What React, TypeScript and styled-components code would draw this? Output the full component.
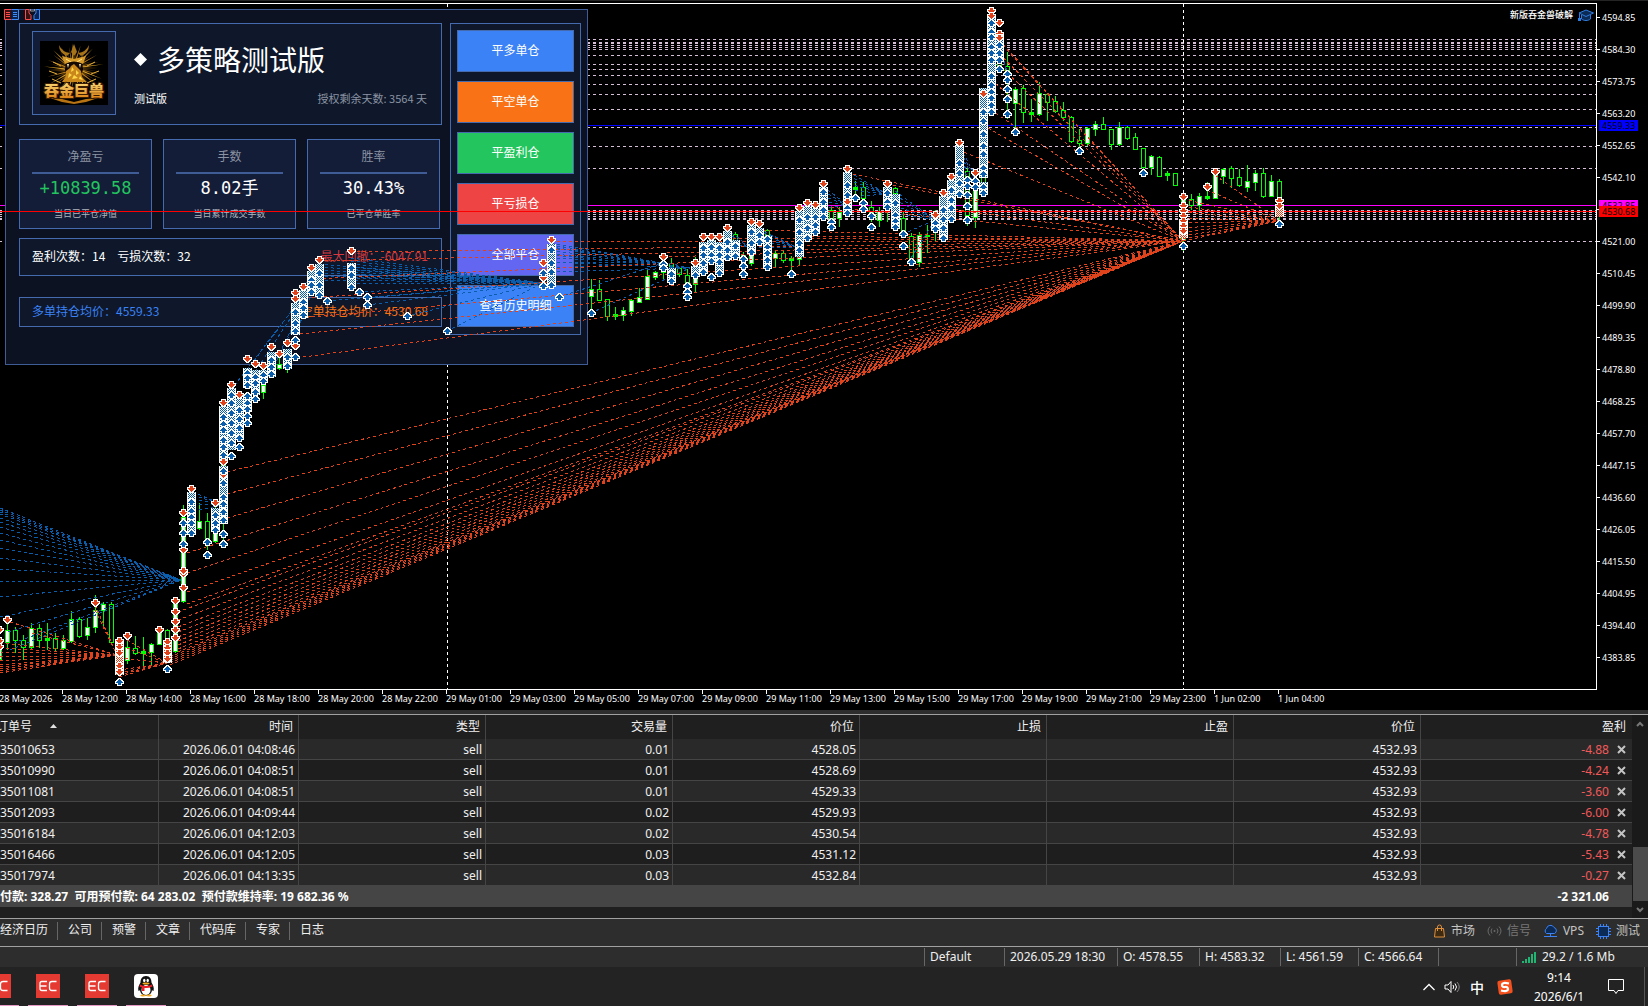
import React from 'react';
import styled, { createGlobalStyle } from 'styled-components';

const SANS = '"Noto Sans", "Noto Sans CJK SC", sans-serif';
const CJK = '"Noto Sans CJK SC", "Noto Sans", sans-serif';
const UP = '#0a5dab';
const DOWN = '#e0431c';
const LIME = '#00ff00';

const GlobalStyle = createGlobalStyle`
  * { box-sizing: border-box; }
  body { margin: 0; background: #232323; font-family: ${SANS}; font-size: 12px; color: #f0f0f0; overflow: hidden; }
  button { font: inherit; color: inherit; border: 0; padding: 0; background: none; cursor: pointer; }
`;

/* ---------- chart data ---------- */

// x, high, low, body top, body bottom, filled
type Candle = [number, number, number, number, number, 0 | 1];
const candles: Candle[] = [
  [-1, 630, 660, 642, 659, 1], [7, 622, 650, 630, 642, 1], [15, 627, 653, 630, 640, 0], [23, 635, 660, 640, 647, 0],
  [31, 623, 650, 628, 647, 1], [39, 624, 648, 628, 640, 0], [47, 623, 650, 638, 640, 0], [55, 633, 652, 638, 648, 0],
  [63, 635, 650, 640, 648, 1], [71, 611, 643, 619, 641, 1], [79, 617, 638, 619, 636, 0], [87, 618, 640, 627, 635, 1],
  [95, 595, 633, 610, 627, 1], [103, 602, 627, 604, 610, 1], [111, 602, 644, 604, 642, 0], [127, 640, 664, 647, 660, 1],
  [135, 636, 655, 648, 653, 0], [143, 637, 666, 651, 653, 0], [151, 643, 666, 644, 652, 1], [159, 629, 645, 630, 644, 1],
  [167, 629, 646, 630, 645, 0], [175, 600, 653, 603, 651, 1], [183, 505, 603, 517, 601, 1], [199, 503, 530, 521, 528, 1],
  [207, 513, 550, 521, 539, 0], [215, 505, 543, 532, 541, 1], [223, 450, 545, 460, 490, 0], [263, 370, 399, 385, 392, 1],
  [279, 350, 370, 364, 368, 1], [287, 350, 373, 355, 366, 0], [591, 279, 310, 289, 296, 1], [599, 280, 301, 289, 300, 0],
  [607, 299, 321, 299, 316, 0], [615, 307, 320, 314, 316, 0], [623, 307, 321, 310, 315, 1], [631, 299, 316, 300, 311, 1],
  [639, 288, 302, 297, 302, 1], [647, 269, 299, 276, 299, 1], [655, 271, 280, 272, 277, 1], [663, 262, 280, 264, 272, 1],
  [671, 258, 272, 263, 270, 0], [679, 267, 277, 268, 274, 0], [687, 269, 283, 275, 283, 0], [695, 257, 293, 277, 284, 1],
  [735, 232, 257, 234, 250, 0], [743, 252, 265, 255, 263, 0], [751, 250, 266, 255, 263, 1], [767, 229, 250, 230, 240, 0],
  [775, 250, 267, 253, 258, 1], [783, 250, 263, 253, 260, 0], [791, 256, 273, 258, 260, 0], [799, 250, 265, 252, 259, 1],
  [831, 206, 222, 210, 219, 0], [839, 207, 227, 212, 218, 1], [855, 181, 196, 187, 189, 1], [863, 182, 203, 187, 198, 0],
  [871, 201, 222, 207, 217, 0], [879, 207, 227, 211, 220, 1], [887, 205, 222, 207, 209, 0], [895, 187, 210, 188, 193, 0],
  [903, 212, 237, 218, 232, 0], [911, 233, 262, 236, 262, 0], [919, 232, 267, 235, 262, 1], [927, 225, 253, 235, 236, 0],
  [935, 210, 241, 216, 230, 0], [967, 167, 226, 171, 215, 0], [975, 175, 228, 188, 217, 1], [983, 165, 190, 170, 188, 0],
  [999, 55, 72, 60, 70, 0], [1007, 52, 119, 66, 72, 0], [1015, 87, 130, 89, 103, 1], [1023, 85, 123, 88, 112, 0],
  [1031, 99, 122, 112, 114, 0], [1039, 82, 116, 93, 114, 1], [1047, 94, 121, 94, 102, 0], [1055, 96, 113, 101, 111, 0],
  [1063, 102, 121, 110, 117, 0], [1071, 116, 143, 117, 141, 0], [1079, 129, 148, 140, 143, 0], [1087, 127, 146, 128, 143, 1],
  [1095, 121, 136, 124, 129, 1], [1103, 117, 130, 124, 129, 0], [1111, 129, 150, 129, 144, 0], [1119, 122, 146, 127, 144, 1],
  [1127, 126, 140, 127, 138, 0], [1135, 133, 150, 137, 149, 0], [1143, 148, 172, 148, 167, 0], [1151, 155, 175, 156, 167, 1],
  [1159, 156, 177, 157, 176, 0], [1167, 171, 181, 173, 175, 1], [1175, 173, 186, 173, 185, 0], [1183, 194, 251, 200, 240, 1],
  [1191, 194, 210, 199, 205, 0], [1199, 193, 211, 196, 205, 1], [1207, 182, 200, 196, 198, 0], [1215, 173, 199, 174, 198, 1],
  [1223, 168, 184, 169, 176, 1], [1231, 166, 188, 168, 178, 0], [1239, 169, 187, 177, 185, 0], [1247, 165, 192, 181, 187, 1],
  [1255, 170, 191, 173, 182, 1], [1263, 168, 198, 173, 196, 0], [1271, 175, 196, 181, 196, 1], [1279, 179, 220, 181, 215, 0],
];

// one entry per bar: sell marks, buy marks, packed buy ranges, packed sell ranges
type Marks = { x: number; s?: number[]; b?: number[]; db?: [number, number][]; ds?: [number, number][] };
const marks: Marks[] = [
  { x: -1, s: [630, 641, 647] }, { x: 7, s: [620] }, { x: 95, s: [603] },
  { x: 119, ds: [[640, 675]], s: [641, 647, 653, 666, 672], b: [682] },
  { x: 127, s: [636] }, { x: 159, s: [630] },
  { x: 167, ds: [[643, 663]], s: [642, 648, 653, 659], b: [669] },
  { x: 175, s: [601, 612, 622, 630, 638] },
  { x: 183, s: [513, 550, 574, 571, 588], b: [523, 533, 544] },
  { x: 191, db: [[492, 534]], s: [489], b: [502, 511, 517, 523, 533] },
  { x: 207, b: [542, 555] },
  { x: 215, db: [[508, 532]], s: [503], b: [515, 523, 530] },
  { x: 223, db: [[406, 462], [466, 524]], s: [403, 462, 475], b: [417, 424, 430, 440, 447, 455, 471, 483, 497, 504, 512, 520, 534, 544] },
  { x: 231, db: [[388, 450]], s: [385], b: [395, 403, 413, 423, 433, 443, 456] },
  { x: 239, db: [[398, 440]], s: [395], b: [410, 419, 428, 438, 447] },
  { x: 247, db: [[368, 388], [394, 412]], s: [359], b: [373, 378, 385, 396, 403, 409, 416, 423] },
  { x: 255, db: [[370, 395]], s: [364], b: [377, 383, 392, 399] },
  { x: 263, db: [[370, 383]], s: [366], b: [375, 381] },
  { x: 271, db: [[352, 377]], s: [347], b: [360, 367, 374] },
  { x: 279, s: [354] },
  { x: 287, db: [[349, 369]], s: [343], b: [357, 366] },
  { x: 295, db: [[303, 335]], s: [293, 299, 346], b: [312, 323, 331, 340, 357] },
  { x: 303, db: [[290, 318]], s: [287], b: [302, 308, 315] },
  { x: 311, db: [[271, 293]], s: [268], b: [280, 285, 292] },
  { x: 319, db: [[264, 297]], s: [260], b: [273, 285, 295] },
  { x: 327, b: [301] },
  { x: 351, db: [[263, 289]], s: [251], b: [268, 275, 287] },
  { x: 359, b: [292] }, { x: 367, b: [297, 305] }, { x: 407, b: [316] }, { x: 447, b: [331] },
  { x: 543, s: [278, 263], b: [273, 286] },
  { x: 551, db: [[244, 287]], s: [240], b: [250, 263, 272, 285] },
  { x: 559, b: [297] }, { x: 591, b: [313] },
  { x: 663, b: [264, 268], s: [257] }, { x: 671, db: [[268, 280]], b: [274, 281] },
  { x: 687, b: [286, 292, 297] },
  { x: 695, db: [[266, 277]], s: [263], b: [275] },
  { x: 703, db: [[242, 273]], s: [237], b: [248, 255, 263, 272] },
  { x: 711, db: [[240, 263]], s: [237], b: [247, 255, 261, 277] },
  { x: 719, db: [[242, 275]], s: [237], b: [248, 255, 262, 273] },
  { x: 727, db: [[231, 260]], s: [228], b: [242, 250, 257] },
  { x: 735, db: [[240, 258]], b: [246, 256] },
  { x: 743, b: [259, 266, 274] },
  { x: 751, db: [[225, 254]], s: [222], b: [232, 243, 252] },
  { x: 759, db: [[228, 243]], s: [224], b: [235, 242] },
  { x: 767, db: [[236, 267]], b: [239, 247, 253, 260, 267] },
  { x: 791, b: [274] },
  { x: 799, db: [[211, 257]], s: [208], b: [220, 232, 243, 250] },
  { x: 807, db: [[206, 238]], s: [203], b: [217, 228, 238] },
  { x: 815, db: [[208, 233]], s: [205], b: [217, 225, 232] },
  { x: 823, db: [[187, 218]], s: [184], b: [192, 202, 210, 217] },
  { x: 831, b: [222, 227] },
  { x: 847, db: [[172, 213]], s: [169, 202], b: [185, 195, 208, 213] },
  { x: 855, b: [198] }, { x: 863, b: [203, 209] }, { x: 871, b: [216, 227] },
  { x: 887, db: [[187, 208]], s: [184], b: [193, 202, 207] },
  { x: 895, db: [[194, 227]], b: [203, 215, 221, 227] },
  { x: 903, b: [234, 246] }, { x: 911, b: [262] },
  { x: 935, db: [[218, 231]], s: [215], b: [223, 229] },
  { x: 943, db: [[196, 239]], s: [193], b: [210, 219, 228, 238] },
  { x: 951, db: [[180, 218]], s: [177], b: [190, 200, 208, 219] },
  { x: 959, db: [[145, 195]], s: [143], b: [163, 173, 183, 194] },
  { x: 967, b: [180, 186, 195, 206, 220] },
  { x: 975, s: [173], b: [181, 187] },
  { x: 983, db: [[88, 178], [182, 194]], s: [94], b: [112, 121, 134, 146, 154, 168, 174, 187, 193] },
  { x: 991, db: [[15, 112]], s: [11, 16], b: [23, 32, 37, 47, 53, 60, 76, 85, 92, 98, 105, 112] },
  { x: 999, db: [[32, 60]], s: [23, 34, 38], b: [45, 53, 60, 69] },
  { x: 1007, b: [74, 80, 89, 99, 114] },
  { x: 1015, b: [132] }, { x: 1079, b: [151] }, { x: 1143, b: [173] },
  { x: 1183, ds: [[219, 238]], s: [197, 206, 211, 216, 221, 226, 231], b: [246] },
  { x: 1207, s: [187] }, { x: 1215, s: [172] },
  { x: 1279, ds: [[205, 217]], s: [201, 206], b: [224] },
];

// a fan joins many entries to one exit: exit x, exit y, [entry x, entry y] list
type Fan = [number, number, [number, number][]];
const at = (x: number, ...ys: number[]): [number, number][] => ys.map((y) => [x, y]);
const buyFans: Fan[] = [
  [181, 580, [...at(0, 508, 510, 512, 514, 518, 522, 527, 533, 540, 548, 558, 569, 582, 597, 617), [8, 632], [14, 643], [10, 650]]],
  [543, 283, [...at(319, 264, 267, 270, 273, 276, 280), ...at(351, 258, 261, 264, 267, 270, 274, 278, 284), [359, 292], [367, 298], [367, 305], [407, 316], [447, 331], [327, 301]]],
  [663, 263, [...at(551, 243, 245, 248, 251, 254, 258, 262, 268), [559, 297]]],
  [690, 268, [...at(551, 247, 255, 262, 272), [591, 313], ...at(663, 262, 267)]],
  [751, 248, at(727, 229, 233, 238, 242)],
  [796, 247, at(759, 229, 231, 234, 238, 242, 247)],
  [847, 205, at(823, 186, 191, 196, 201, 208)],
  [887, 194, at(849, 172, 176, 180, 184, 190, 197)],
  [935, 220, at(895, 191, 195, 200, 206, 213)],
  [935, 220, [[903, 234], [911, 258]]],
  [981, 185, at(960, 148, 152, 157, 162, 170)],
  [1007, 72, at(992, 15, 20, 28)],
  [223, 505, at(193, 492, 495, 499, 504, 511)],
  [319, 264, at(303, 288, 296, 303)],
  [319, 275, [[231, 390], [247, 370], [255, 372], [263, 385], [271, 372], [287, 356]]],
];
const sellFans: Fan[] = [
  [117, 655, [...at(0, 643, 648, 652, 657, 661, 665, 667, 669, 671, 673), [10, 622], [32, 633], [95, 605], [95, 610]]],
  [167, 663, [...at(119, 670, 673, 675, 677), [119, 658], [127, 640], [127, 648]]],
  [1183, 241, [
    ...at(227, 472, 494, 518), ...at(187, 553, 573, 592, 604), ...at(178, 612, 620, 627, 632, 637, 641, 645, 649, 652), ...at(170, 657, 659, 661, 663, 665),
  ]],
  [1183, 241, [
    [303, 357], [300, 334], [300, 318], [306, 298], [311, 279], [319, 261], [351, 252], [551, 241], [663, 257], [703, 238], [751, 230],
    [799, 236], [807, 205], [847, 173], [887, 184], [943, 208], [959, 150], [983, 125], [991, 110], [991, 80], [999, 65], [999, 40], [1007, 50], [991, 45],
  ]],
  [1279, 221, [...at(1183, 199, 206, 212, 218, 223, 228, 232, 236, 239, 241), [1207, 190], [1215, 175]]],
];

const orderLines = [39, 42, 43, 45, 47, 49, 55, 64, 69, 75, 84, 94, 109, 127, 146, 168, 210, 212, 214, 216, 218, 219, 241];
const prices = Array.from({ length: 21 }, (_, i) => (4594.85 - i * 10.55).toFixed(2));
// this gridline's label gives way to the bid and average price tags
const COVERED = '4531.55';
const times = [
  '28 May 2026', '28 May 12:00', '28 May 14:00', '28 May 16:00', '28 May 18:00', '28 May 20:00', '28 May 22:00',
  '29 May 01:00', '29 May 03:00', '29 May 05:00', '29 May 07:00', '29 May 09:00', '29 May 11:00', '29 May 13:00',
  '29 May 15:00', '29 May 17:00', '29 May 19:00', '29 May 21:00', '29 May 23:00', '1 Jun 02:00', '1 Jun 04:00',
];

/* ---------- chart ---------- */

const Page = styled.div`
  min-height: 100vh;
  display: flex;
  flex-direction: column;
`;
const ChartSection = styled.section`
  display: grid;
  grid-template-columns: 1fr 51px;
  background: #000;
  border-top: 1px solid #242424;
  padding-top: 2px;
  flex: none;
`;
const Plot = styled.div`
  position: relative;
  height: 687px;
  border: 1px solid #fff;
  border-left: 0;
  overflow: hidden;
`;
const Layer = styled.svg`
  position: absolute;
  inset: 0;
  width: 100%;
  height: 100%;
  pointer-events: none;
  shape-rendering: crispEdges;
`;
const PriceAxis = styled.div`
  position: relative;
  display: flex;
  flex-direction: column;
  overflow: hidden;
  height: 687px;
  padding-top: 6px;
`;
const Price = styled.div`
  flex: none;
  height: 32px;
  display: flex;
  align-items: flex-start;
  gap: 2px;
  font-size: 9px;
  line-height: 18px;
  color: #fff;
  &::before { content: ''; width: 3px; height: 1px; margin-top: 8px; background: #fff; }
`;
const PriceTag = styled.div<{ $top: number; $color: string }>`
  position: absolute;
  left: 2px;
  top: ${(p) => p.$top}px;
  width: 39px;
  height: 11px;
  padding-left: 3px;
  font-size: 9px;
  line-height: 12px;
  color: #000;
  background: ${(p) => p.$color};
`;
const TimeAxis = styled.div`
  grid-column: 1 / -1;
  display: flex;
  height: 20px;
  overflow: hidden;
`;
const Time = styled.div`
  flex: none;
  width: 64px;
  font-size: 9px;
  line-height: 18px;
  color: #fff;
  white-space: nowrap;
  text-indent: -1px;
  &::before { content: ''; position: absolute; width: 1px; height: 4px; background: #fff; }
  &:first-child { width: 63px; }
  &:first-child::before { display: none; }
`;
const ExpertName = styled.div`
  position: absolute;
  top: 3px;
  right: 2px;
  display: flex;
  align-items: center;
  gap: 5px;
  font: 500 9px/16px ${CJK};
  color: #fff;
`;
const ChartTools = styled.div`
  position: absolute;
  left: 4px;
  top: 5px;
  display: flex;
  gap: 6px;
`;

const ARROW_UP = 'M0-3h1v1h1v1h1v1h1v1h-2v2h-3v-2h-2v-1h1v-1h1v-1h1z';
const ARROW_DOWN = 'M0 3h1v-1h1v-1h1v-1h1v-1h-2v-2h-3v2h-2v1h1v1h1v1h1z';

const Arrow = ({ x, y, buy }: { x: number; y: number; buy?: boolean }) => (
  <path d={buy ? ARROW_UP : ARROW_DOWN} transform={`translate(${x} ${y})`} fill={buy ? UP : DOWN} stroke="#fff" strokeWidth={2} paintOrder="stroke" />
);

const Fans = ({ fans, color }: { fans: Fan[]; color: string }) => (
  <g stroke={color} strokeWidth={1} strokeDasharray="3 3">
    {fans.map(([ex, ey, starts], i) => starts.map(([x, y], j) => <line key={`${i}-${j}`} x1={x} y1={y} x2={ex} y2={ey} />))}
  </g>
);

const BackLayer = () => (
  <Layer aria-hidden="true">
    <g transform="translate(0 -4)">
      <g stroke="#d8bfd8" strokeDasharray="3 3" strokeDashoffset={1}>
        {orderLines.map((y) => <line key={y} x1={0} x2="100%" y1={y + 0.5} y2={y + 0.5} />)}
      </g>
      <line x1={0} x2="100%" y1={125.5} y2={125.5} stroke="#00f" />
      <line x1={0} x2="100%" y1={205.5} y2={205.5} stroke="#f0f" />
      <g stroke="#fff" strokeDasharray="3 3">
        <line x1={447.5} x2={447.5} y1={4} y2={689} />
        <line x1={1183.5} x2={1183.5} y1={4} y2={689} />
      </g>
    </g>
  </Layer>
);

const FrontLayer = () => (
  <Layer aria-hidden="true">
    <defs>
      <pattern id="packedBuy" width={2} height={2} patternUnits="userSpaceOnUse">
        <rect width={2} height={2} fill="#fff" /><rect width={1} height={1} fill={UP} /><rect x={1} y={1} width={1} height={1} fill={UP} />
      </pattern>
      <pattern id="packedSell" width={2} height={2} patternUnits="userSpaceOnUse">
        <rect width={2} height={2} fill="#fff" /><rect width={1} height={1} fill={DOWN} /><rect x={1} y={1} width={1} height={1} fill={DOWN} />
      </pattern>
    </defs>
    <g transform="translate(0 -4)">
      {candles.map(([x, hi, lo, top, bottom, filled]) => (
        <g key={x}>
          <rect x={x} y={hi} width={1} height={lo - hi} fill={LIME} />
          <rect x={x - 2} y={top} width={5} height={Math.max(2, bottom - top + 1)} fill={LIME} />
          {bottom - top > 2 && <rect x={x - 1} y={top + 1} width={3} height={bottom - top - 1} fill={filled ? '#fff' : '#000'} />}
        </g>
      ))}
      <Fans fans={buyFans} color={UP} />
      <Fans fans={sellFans} color={DOWN} />
      <line x1={0} x2="100%" y1={211.5} y2={211.5} stroke="#f00" />
      {marks.map(({ x, s = [], b = [], db = [], ds = [] }) => (
        <g key={x}>
          {[...db.map((r) => [r, 'url(#packedBuy)'] as const), ...ds.map((r) => [r, 'url(#packedSell)'] as const)].map(([[y0, y1], fill]) => (
            <g key={y0}>
              <rect x={x - 4} y={y0} width={9} height={y1 - y0} fill="#fff" />
              <rect x={x - 3} y={y0} width={7} height={y1 - y0} fill={fill} />
            </g>
          ))}
          {s.map((y) => <Arrow key={`s${y}`} x={x} y={y} />)}
          {b.map((y) => <Arrow key={`b${y}`} x={x} y={y} buy />)}
        </g>
      ))}
    </g>
  </Layer>
);

/* ---------- strategy panel ---------- */

const LINE = '#456aae';

const Panel = styled.aside`
  position: absolute;
  left: 5px;
  top: 5px;
  display: grid;
  grid-template-columns: 423px 131px;
  gap: 8px;
  width: 583px;
  height: 356px;
  padding: 13px 6px 0 13px;
  align-items: start;
  background: #0c1222;
  border: 1px solid #3f5c96;
  font-family: ${CJK};
`;
const Info = styled.div`
  display: flex;
  flex-direction: column;
`;
const Head = styled.header`
  display: flex;
  gap: 18px;
  height: 102px;
  padding: 7px 14px 7px 12px;
  background: #0e182a;
  border: 1px solid ${LINE};
`;
const LogoFrame = styled.div`
  flex: none;
  width: 84px;
  height: 84px;
  padding: 9px 7px;
  background: #141d38;
  border: 1px solid ${LINE};
  svg { display: block; }
`;
const HeadText = styled.div`
  flex: 1;
  display: flex;
  flex-direction: column;
  padding-top: 8px;
`;
const Title = styled.h1`
  margin: 0;
  display: flex;
  align-items: center;
  gap: 10px;
  font-size: 28px;
  font-weight: 400;
  line-height: 40px;
  color: #fff;
  svg { display: block; }
`;
const SubRow = styled.div`
  display: flex;
  justify-content: space-between;
  margin-top: 9px;
  font-size: 11px;
  line-height: 20px;
  color: #fff;
  span:last-child { color: #8b93a3; }
`;
const Stats = styled.div`
  display: grid;
  grid-template-columns: repeat(3, 133px);
  gap: 11px;
  margin-top: 14px;
`;
const Stat = styled.div`
  height: 90px;
  padding: 6px 12px 0;
  background: #141d38;
  border: 1px solid ${LINE};
  text-align: center;
  white-space: nowrap;
`;
const StatName = styled.div`
  font-size: 12px;
  line-height: 20px;
  color: #8b93a3;
  padding-bottom: 6px;
  border-bottom: 2px solid #3f5c96;
`;
const StatValue = styled.div<{ $color: string }>`
  font: 17px/28px "DejaVu Sans Mono", "Noto Sans CJK SC", monospace;
  color: ${(p) => p.$color};
`;
const StatNote = styled.div`
  margin-top: 4px;
  font-size: 9px;
  line-height: 16px;
  color: #b0b5bf;
`;
const Strip = styled.div<{ $height: number; $gap: number }>`
  display: flex;
  align-items: center;
  gap: 12px;
  height: ${(p) => p.$height}px;
  margin-top: ${(p) => p.$gap}px;
  padding: 0 13px 2px 12px;
  background: #0e182a;
  border: 1px solid ${LINE};
  font-size: 12px;
  line-height: 20px;
  white-space: nowrap;
`;
const Figure = styled.span<{ $color?: string; $right?: boolean }>`
  color: ${(p) => p.$color ?? '#fff'};
  margin-left: ${(p) => (p.$right ? 'auto' : '0')};
`;
const Actions = styled.div`
  display: flex;
  flex-direction: column;
  gap: 9px;
  padding: 6px 6px 7px;
  background: #0e182a;
  border: 1px solid ${LINE};
`;
const Action = styled.button<{ $color: string }>`
  height: 42px;
  padding-bottom: 3px;
  font-size: 12px;
  color: #fff;
  background: ${(p) => p.$color};
  border: 1px solid ${LINE};
`;

const scales = ['#3d2606', '#8a5a10', '#d29a26', '#5d3a08', '#b57a18'];
const spikes = Array.from({ length: 44 }, (_, i) => {
  const a = (i / 44) * Math.PI * 2;
  const long = 22 + ((i * 7) % 5) * 2;
  const point = (angle: number, r: number) => `${(34 + Math.cos(angle) * r).toFixed(1)} ${(28 + Math.sin(angle) * r * 0.86).toFixed(1)}`;
  return { d: `M${point(a - 0.09, 9)}L${point(a + 0.1, long)}L${point(a + 0.11, 9)}z`, fill: scales[i % 5] };
});

const Logo = () => (
  <svg width="68" height="64" viewBox="0 0 68 64" role="img" aria-label="logo">
    <defs>
      <linearGradient id="gold" x1="0" y1="0" x2="0" y2="1"><stop offset="0" stopColor="#ffe98a" /><stop offset="1" stopColor="#d8780a" /></linearGradient>
    </defs>
    <rect width="68" height="64" fill="#000" />
    {spikes.map((s) => <path key={s.d} d={s.d} fill={s.fill} />)}
    <path d="M19 4q0 8 8 11l3-3q-8-1-11-8zM49 4q0 8-8 11l-3-3q8-1 11-8zM34 3l3 8-3 4-3-4z" fill="#a8741a" />
    <path d="M22 15l12 3 12-3-3 8-9-2-9 2z" fill="#d79c2c" />
    <path d="M26 18l5 3M42 18l-5 3" stroke="#ffe58a" strokeWidth="1" />
    <path d="M25 23q9-5 18 0l-2 8H27z" fill="#150a02" />
    <path d="M27 23l1 4 1-4zM39 23l1 4 1-4z" fill="#ffe9a0" />
    <path d="M31 25l3-2 3 3 4 4 1 6 5 5H22l4-6 0-5 4-3z" fill="#c9861a" />
    <path d="M32 26l2 3-3 2zM36 29l3 3-3 2zM29 32l3 2-4 3zM34 34l4 3-6 1zM40 35l3 4-4-1z" fill="#ffd84a" />
    <path d="M12 38l9 4M56 38l-9 4M9 30l8 3M59 30l-8 3M13 21l8 4M55 21l-8 4" stroke="#e9b138" strokeWidth="1" />
    <path d="M10 57l12 1 12 3 12-3 12-1-12 4-12 2-12-2z" fill="#b87412" />
    <text x="34" y="55" textAnchor="middle" fontFamily="Noto Sans CJK SC, sans-serif" fontWeight="900" fontSize="15" fill="url(#gold)" stroke="#3a1c02" strokeWidth="2" paintOrder="stroke">吞金巨兽</text>
  </svg>
);

const stats = [
  { name: '净盈亏', value: '+10839.58', note: '当日已平仓净值', color: '#22c55e' },
  { name: '手数', value: '8.02手', note: '当日累计成交手数', color: '#fff' },
  { name: '胜率', value: '30.43%', note: '已平仓单胜率', color: '#fff' },
];
const actions = [
  ['平多单仓', '#3b82f6'], ['平空单仓', '#f97316'], ['平盈利仓', '#22c55e'],
  ['平亏损仓', '#ef4444'], ['全部平仓', '#6366f1'], ['查看历史明细', '#3b82f6'],
];

const StrategyPanel = () => (
  <Panel>
    <Info>
      <Head>
        <LogoFrame><Logo /></LogoFrame>
        <HeadText>
          <Title>
            <svg width="13" height="13" viewBox="0 0 13 13" aria-hidden="true"><path d="M6.500 0L13 6.500 6.500 13 0 6.500z" fill="#fff" /></svg>
            多策略测试版
          </Title>
          <SubRow><span>测试版</span><span>授权剩余天数: 3564 天</span></SubRow>
        </HeadText>
      </Head>
      <Stats>
        {stats.map((s) => (
          <Stat key={s.name}>
            <StatName>{s.name}</StatName>
            <StatValue $color={s.color}>{s.value}</StatValue>
            <StatNote>{s.note}</StatNote>
          </Stat>
        ))}
      </Stats>
      <Strip $height={38} $gap={9}>
        <Figure>盈利次数：14</Figure>
        <Figure>亏损次数：32</Figure>
        <Figure $color="#d5383e" $right>最大回撤：-6047.91</Figure>
      </Strip>
      <Strip $height={30} $gap={21}>
        <Figure $color="#3b82f6">多单持仓均价：4559.33</Figure>
        <Figure $color="#f97316" $right>空单持仓均价：4530.68</Figure>
      </Strip>
    </Info>
    <Actions>
      {actions.map(([label, color]) => <Action key={label} $color={color}>{label}</Action>)}
    </Actions>
  </Panel>
);

/* ---------- positions ---------- */

const Toolbox = styled.section`
  flex: none;
  display: grid;
  grid-template-columns: 1fr 16px;
  background: #1f1f1f;
  border-top: 1px solid #a0a0a0;
  box-shadow: 0 -4px 0 #2d2d2d;
  margin-top: 4px;
`;
const Orders = styled.table`
  width: 100%;
  table-layout: fixed;
  border-collapse: separate;
  border-spacing: 0;
`;
const HeadCell = styled.th<{ $first?: boolean; $last?: boolean }>`
  height: 24px;
  padding: 0 ${(p) => (p.$last ? 6 : 5)}px 0 0;
  font-weight: 400;
  line-height: 20px;
  text-align: ${(p) => (p.$first ? 'left' : 'right')};
  text-indent: ${(p) => (p.$first ? '-4px' : '0')};
  border-right: ${(p) => (p.$last ? '0' : '1px solid #454545')};
  svg { margin: 0 0 3px 18px; }
`;
const Row = styled.tr`
  background: #1e1e1e;
  &:nth-child(odd) { background: #292929; }
  &:last-child td { border-bottom: 0; height: 20px; }
`;
const Cell = styled.td<{ $first?: boolean; $last?: boolean }>`
  height: 21px;
  padding: 2px ${(p) => (p.$last ? 6 : 3)}px 0 0;
  line-height: 18px;
  text-align: ${(p) => (p.$first ? 'left' : 'right')};
  border-right: ${(p) => (p.$last ? '0' : '1px solid #454545')};
  border-bottom: 1px solid #454545;
  color: ${(p) => (p.$last ? '#f0595a' : '#f0f0f0')};
`;
const CloseButton = styled.button`
  margin-left: 8px;
  width: 9px;
  height: 9px;
  svg { display: block; }
`;
const Total = styled.td<{ $right?: boolean }>`
  height: 22px;
  padding: 2px ${(p) => (p.$right ? 23 : 0)}px 0 0;
  font-weight: 700;
  line-height: 20px;
  white-space: pre;
  text-align: ${(p) => (p.$right ? 'right' : 'left')};
  background: #454545;
  color: #fff;
`;
const Spacer = styled.td`
  height: 11px;
  padding: 0;
`;
const Scrollbar = styled.div`
  display: flex;
  flex-direction: column;
  align-items: center;
  padding: 6px 0 5px;
  background: #1a1a1a;
`;
const Thumb = styled.div`
  width: 15px;
  height: 54px;
  margin: auto 0 6px;
  background: #4b4b4b;
`;
const NarrowCol = styled.col<{ $width: number }>`
  width: ${(p) => p.$width}px;
`;

const orders = [
  ['35010653', '04:08:46', '0.01', '4528.05', '-4.88'],
  ['35010990', '04:08:51', '0.01', '4528.69', '-4.24'],
  ['35011081', '04:08:51', '0.01', '4529.33', '-3.60'],
  ['35012093', '04:09:44', '0.02', '4529.93', '-6.00'],
  ['35016184', '04:12:03', '0.02', '4530.54', '-4.78'],
  ['35016466', '04:12:05', '0.03', '4531.12', '-5.43'],
  ['35017974', '04:13:35', '0.03', '4532.84', '-0.27'],
];

const Chevron = ({ down }: { down?: boolean }) => (
  <svg width="8" height="6" viewBox="0 0 8 6" aria-hidden="true">
    <path d={down ? 'M1 1l3 3 3-3' : 'M1 5l3-3 3 3'} fill="none" stroke="#777" strokeWidth="2" />
  </svg>
);

const Positions = () => (
  <Toolbox>
    <Orders>
      <colgroup>
        {[159, 140, 187, 187, 187, 187, 187, 187].map((w, i) => <NarrowCol key={i} $width={w} />)}
        <col />
      </colgroup>
      <thead>
        <tr>
          <HeadCell $first>订单号<svg width="7" height="4" viewBox="0 0 7 4" aria-hidden="true"><path d="M0 4L3.500 0 7 4z" fill="#e0e0e0" /></svg></HeadCell>
          {['时间', '类型', '交易量', '价位', '止损', '止盈', '价位'].map((t, i) => <HeadCell key={i}>{t}</HeadCell>)}
          <HeadCell $last>盈利</HeadCell>
        </tr>
      </thead>
      <tbody>
        {orders.map(([id, time, volume, price, profit]) => (
          <Row key={id}>
            <Cell $first>{id}</Cell>
            <Cell>2026.06.01 {time}</Cell>
            <Cell>sell</Cell>
            <Cell>{volume}</Cell>
            <Cell>{price}</Cell>
            <Cell />
            <Cell />
            <Cell>4532.93</Cell>
            <Cell $last>
              {profit}
              <CloseButton aria-label="关闭">
                <svg width="9" height="9" viewBox="0 0 9 9"><path d="M1 1l7 7M8 1L1 8" stroke="#c4c4c4" strokeWidth="2" /></svg>
              </CloseButton>
            </Cell>
          </Row>
        ))}
      </tbody>
      <tfoot>
        <tr>
          <Total colSpan={8}>{'付款: 328.27  可用预付款: 64 283.02  预付款维持率: 19 682.36 %'}</Total>
          <Total $right>-2 321.06</Total>
        </tr>
        <tr><Spacer colSpan={9} /></tr>
      </tfoot>
    </Orders>
    <Scrollbar><Chevron /><Thumb /><Chevron down /></Scrollbar>
  </Toolbox>
);

/* ---------- tabs, status bar, taskbar ---------- */

const TabBar = styled.nav`
  flex: none;
  display: flex;
  align-items: center;
  height: 28px;
  padding: 0 8px 3px 0;
  background: #2d2d2d;
  border-top: 1px solid #a0a0a0;
`;
const Tab = styled.button`
  height: 18px;
  padding: 0 9px 2px 10px;
  line-height: 16px;
  border-left: 1px solid #666;
  &:first-child { padding-left: 0; border-left: 0; }
`;
const Service = styled.button<{ $off?: boolean; $push?: boolean }>`
  display: flex;
  align-items: center;
  gap: 5px;
  margin-left: ${(p) => (p.$push ? 'auto' : '12px')};
  line-height: 18px;
  color: ${(p) => (p.$off ? '#777' : '#c4c4c4')};
  svg { display: block; }
`;
const StatusBar = styled.footer`
  flex: none;
  display: flex;
  align-items: center;
  justify-content: flex-end;
  height: 21px;
  background: #2d2d2d;
  border-top: 1px solid #a0a0a0;
`;
const Status = styled.div<{ $width: number }>`
  display: flex;
  align-items: center;
  gap: 6px;
  width: ${(p) => p.$width}px;
  height: 18px;
  padding-left: 5px;
  line-height: 18px;
  border-left: 1px solid #666;
  white-space: nowrap;
`;
const Taskbar = styled.div`
  flex: 1;
  min-height: 39px;
  display: flex;
  justify-content: space-between;
  background: #232323;
`;
const Apps = styled.div`
  display: flex;
  gap: 9px;
  margin-left: -21px;
`;
const TaskButton = styled.button`
  width: 40px;
  height: 39px;
  padding: 0 0 0 8px;
  border-bottom: 1px solid #e79ac6;
  svg { display: block; }
`;
const Tray = styled.div`
  display: flex;
  align-items: center;
  margin-right: 3px;
  border-right: 1px solid #555;
  padding-right: 20px;
  svg { display: block; }
`;
const TrayIcons = styled.div`
  display: flex;
  align-items: center;
  gap: 9px;
  color: #fff;
`;
const InputMode = styled.span`
  margin-right: 4px;
  font: 500 14px/20px ${CJK};
`;
const Clock = styled.time`
  width: 80px;
  margin: 0 9px 0 6px;
  line-height: 19px;
  text-align: center;
  color: #fff;
`;

const EcIcon = () => (
  <svg width="24" height="24" viewBox="0 0 24 24" aria-label="EC">
    <rect width="24" height="24" fill="#e53a31" />
    <path d="M11 7.500H6Q4 7.500 4 9.500v5q0 2 2 2h5M4 12h6.500M20.500 7.500H16q-2.500 0-2.500 2.500v4q0 2.500 2.500 2.500h4.500" fill="none" stroke="#fff" strokeWidth="1.300" />
  </svg>
);
const QqIcon = () => (
  <svg width="24" height="24" viewBox="0 0 24 24" aria-label="QQ">
    <rect width="24" height="24" rx="4" fill="#fff" />
    <path d="M12 2c-4 0-5.500 3-5.500 6.500C5 11 3.500 14 4.500 17c.8 0 1.500-1 1.500-1 .5 4 3 5.500 6 5.500s5.500-1.500 6-5.500c0 0 .7 1 1.500 1 1-3-.5-6-2-8.500C17.500 5 16 2 12 2z" fill="#111" />
    <ellipse cx="12" cy="16" rx="4.500" ry="5" fill="#fff" />
    <path d="M6 10.500c4 2 8 2 12 0l.5 2c-4.500 2-8.500 2-13 0zM8 13l2.500.5v3.500H8z" fill="#e8202a" />
    <ellipse cx="10.300" cy="6.500" rx="1.200" ry="1.700" fill="#fff" /><ellipse cx="13.700" cy="6.500" rx="1.200" ry="1.700" fill="#fff" />
    <ellipse cx="12" cy="9.500" rx="3.500" ry="1" fill="#f7a81b" />
    <ellipse cx="9" cy="21.500" rx="2.700" ry="1" fill="#f7a81b" /><ellipse cx="15" cy="21.500" rx="2.700" ry="1" fill="#f7a81b" />
  </svg>
);

const tabs = ['经济日历', '公司', '预警', '文章', '代码库', '专家', '日志'];

export default function App() {
  return (
    <Page>
      <GlobalStyle />
      <ChartSection>
        <Plot>
          <BackLayer />
          <StrategyPanel />
          <FrontLayer />
          <ChartTools>
            <svg width="15" height="11" viewBox="0 0 15 11" aria-hidden="true">
              <path d="M7.500.5h-7v10h7" fill="#3a1010" stroke="#ff4d4d" /><path d="M7.500.5h7v10h-7" fill="#0b2350" stroke="#3b8cff" />
              <path d="M2 3.500h4M2 5.500h4M2 7.500h4" stroke="#ff4d4d" /><path d="M9 3.500h4M9 5.500h4M9 7.500h4" stroke="#3b8cff" />
            </svg>
            <svg width="15" height="11" viewBox="0 0 15 11" aria-hidden="true">
              <path d="M4 .5H.5v10h5.500V6.500L4 4z" fill="#3a1010" stroke="#ff4d4d" /><path d="M11 .5h3.500v10H9V6.500L11 4z" fill="#0b2350" stroke="#3b8cff" />
              <path d="M5.500 0v2h4V0" fill="none" stroke="#999" />
            </svg>
          </ChartTools>
          <ExpertName>
            新版吞金兽破解
            <svg width="16" height="13" viewBox="0 0 16 13" aria-hidden="true">
              <path d="M3.500 6v4c2.500 2 6.500 2 9 0V6" fill="#0b2a55" stroke="#2f7de0" />
              <path d="M8 1l7.500 3L8 7.500 1 4z" fill="#0b2a55" stroke="#2f7de0" /><path d="M1.500 4.500V10" stroke="#2f7de0" /><rect y="9" width="3" height="3" fill="#2f7de0" />
            </svg>
          </ExpertName>
        </Plot>
        <PriceAxis>
          {prices.map((p) => <Price key={p}>{p === COVERED ? '' : p}</Price>)}
          <PriceTag $top={117} $color="#0000ff">4559.33</PriceTag>
          <PriceTag $top={197} $color="#ff00ff">4532.85</PriceTag>
          <PriceTag $top={203} $color="#ff0000">4530.68</PriceTag>
        </PriceAxis>
        <TimeAxis>
          {times.map((t) => <Time key={t}>{t}</Time>)}
        </TimeAxis>
      </ChartSection>

      <Positions />

      <TabBar>
        {tabs.map((t) => <Tab key={t}>{t}</Tab>)}
        <Service $push>
          <svg width="13" height="14" viewBox="0 0 13 14" aria-hidden="true"><path d="M2.500 4.500h8l1 8.500h-10z" fill="#3d2a10" stroke="#e0903a" /><path d="M4.500 7V3q0-2 2-2t2 2v4" fill="none" stroke="#e0903a" /></svg>
          市场
        </Service>
        <Service $off>
          <svg width="15" height="12" viewBox="0 0 15 12" aria-hidden="true"><g fill="none" stroke="#6a6a6a"><path d="M3 1.500Q-1 6 3 10.500M12 1.500Q16 6 12 10.500M5 3.500Q3 6 5 8.500M10 3.500Q12 6 10 8.500" /></g><circle cx="7.500" cy="6" r="1" fill="#6a6a6a" /></svg>
          信号
        </Service>
        <Service>
          <svg width="15" height="14" viewBox="0 0 15 14" aria-hidden="true"><path d="M3.500 9.500a3 3 0 010-5 4 4 0 017.500-1 3.200 3.200 0 01.500 6z" fill="#0b2a55" stroke="#3b82f6" /><path d="M7.500 9.500v3M1 12.500h13" stroke="#3b82f6" /></svg>
          VPS
        </Service>
        <Service>
          <svg width="15" height="15" viewBox="0 0 15 15" aria-hidden="true"><path d="M4.500 0v15M7.500 0v15M10.500 0v15M0 4.500h15M0 7.500h15M0 10.500h15" stroke="#3b82f6" /><rect x="2.500" y="2.500" width="10" height="10" fill="#0b2a55" stroke="#3b82f6" /></svg>
          测试
        </Service>
      </TabBar>

      <StatusBar>
        <Status $width={80}>Default</Status>
        <Status $width={113}>2026.05.29 18:30</Status>
        <Status $width={82}>O: 4578.55</Status>
        <Status $width={81}>H: 4583.32</Status>
        <Status $width={78}>L: 4561.59</Status>
        <Status $width={80}>C: 4566.64</Status>
        <Status $width={78} />
        <Status $width={132}>
          <svg width="14" height="11" viewBox="0 0 14 11" aria-hidden="true"><path d="M1 11V9M4 11V7M7 11V5M10 11V2M13 11V0" stroke="#1fb573" strokeWidth="2" /></svg>
          29.2 / 1.6 Mb
        </Status>
      </StatusBar>

      <Taskbar>
        <Apps>
          <TaskButton><EcIcon /></TaskButton>
          <TaskButton><EcIcon /></TaskButton>
          <TaskButton><EcIcon /></TaskButton>
          <TaskButton><QqIcon /></TaskButton>
        </Apps>
        <Tray>
          <TrayIcons>
            <svg width="12" height="8" viewBox="0 0 12 8" aria-hidden="true"><path d="M.5 7L6 1.500 11.500 7" fill="none" stroke="#fff" strokeWidth="1.300" /></svg>
            <svg width="17" height="14" viewBox="0 0 17 14" aria-hidden="true"><path d="M1 5h3l3-3.500v11L4 9H1z" fill="none" stroke="#fff" /><path d="M9 5q1.500 2 0 4M11 3.500q3 3.500 0 7" fill="none" stroke="#fff" /><path d="M13 2q4.500 5 0 10" fill="none" stroke="#888" /></svg>
            <InputMode>中</InputMode>
            <svg width="16" height="16" viewBox="0 0 16 16" aria-hidden="true"><rect x="1" y="1" width="14" height="14" rx="2" fill="#f4511e" transform="rotate(-8 8 8)" /><path d="M12 4.500Q5 3 5 5.700T8 8t3 2.300T4 11.500" fill="none" stroke="#fff" strokeWidth="2.200" /></svg>
          </TrayIcons>
          <Clock>9:14<br />2026/6/1</Clock>
          <svg width="16" height="17" viewBox="0 0 16 17" aria-hidden="true"><path d="M.5 1.500h15v11H10l-2 3-2-3H.5z" fill="none" stroke="#fff" /></svg>
        </Tray>
      </Taskbar>
    </Page>
  );
}
